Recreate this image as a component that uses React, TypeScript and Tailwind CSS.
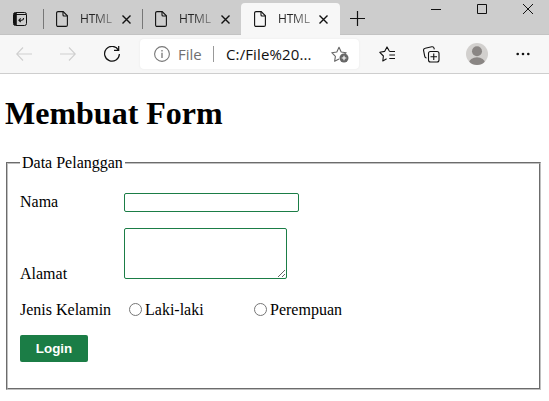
import React from 'react';

function DocIcon() {
  return (
    <svg width="12" height="16" viewBox="0 0 12 16" fill="none" stroke="#111" strokeWidth="1.1" className="shrink-0">
      <path d="M2 .6h5.2l4.2 4.2V14a1.4 1.4 0 0 1-1.4 1.4H2A1.4 1.4 0 0 1 .6 14V2A1.4 1.4 0 0 1 2 .6Z" />
      <path d="M7 .8V4a1 1 0 0 0 1 1h3.2" />
    </svg>
  );
}

function Tab({ className, titleClass }: { className: string; titleClass: string }) {
  return (
    <div className={`flex shrink-0 items-center ${className}`}>
      <DocIcon />
      <span
        className={`ml-3 bg-linear-to-r from-[#222] from-40% to-[#999] bg-clip-text font-['Open_Sans',sans-serif] text-[12px] leading-4 tracking-[-0.2px] text-transparent ${titleClass}`}
      >
        HTML
      </span>
      <svg width="9" height="9" viewBox="0 0 9 9" stroke="#111" strokeWidth="1.4" className="ml-[9px] shrink-0">
        <path d="M.5.5l8 8M8.5.5l-8 8" />
      </svg>
    </div>
  );
}

function TabStrip() {
  return (
    <div className="flex h-[35px] items-start border-b border-[#c3c3c3] bg-[#cdcdcd] pt-[3px]">
      <svg width="14" height="14" viewBox="0 0 14 14" fill="none" stroke="#111" className="mt-[9px] ml-[13px] shrink-0">
        <rect x=".5" y=".5" width="13" height="13" rx="2" />
        <path d="M1 2.5h12" />
        <path d="M2.3 1v12" strokeWidth="3" />
        <path d="M10.5 6v.6c0 1-.6 1.6-1.6 1.6H6M7.7 6.4 5.9 8.2 7.7 10" strokeWidth="1.1" />
      </svg>
      <div className="mt-1.5 ml-4 h-5 w-px bg-[#777]" />
      <Tab className="h-8 w-[98px] pl-3" titleClass="w-[33px]" />
      <div className="mt-1.5 h-5 w-px bg-[#777]" />
      <Tab className="h-8 w-[98px] pl-3" titleClass="w-[33px]" />
      <Tab className="-mb-px h-[33px] w-[99px] rounded-t bg-[#f7f7f7] pb-px pl-[13px]" titleClass="w-8" />
      <svg width="15" height="15" viewBox="0 0 15 15" stroke="#111" strokeWidth="1.2" className="mt-2 ml-[10px] shrink-0">
        <path d="M0 7.5h15M7.5 0v15" />
      </svg>
      <div className="mt-px ml-auto flex w-[118px] gap-9">
        <svg width="10" height="10" viewBox="0 0 10 10" stroke="#111" className="shrink-0">
          <path d="M0 5.5h10" />
        </svg>
        <svg width="10" height="10" viewBox="0 0 10 10" fill="none" stroke="#111" className="shrink-0">
          <path d="M.5.5h9v9h-9z" />
        </svg>
        <svg width="10" height="10" viewBox="0 0 10 10" stroke="#111" className="shrink-0">
          <path d="M0 0l10 10M10 0L0 10" />
        </svg>
      </div>
    </div>
  );
}

function Toolbar() {
  return (
    <div className="flex h-[39px] items-center border-b border-[#cecece] bg-[#f7f7f7] pl-4">
      <svg width="16" height="14" viewBox="0 0 16 14" fill="none" stroke="#cfcfcf" strokeWidth="1.1" className="shrink-0">
        <path d="M16 7H.8M7 .5.7 7 7 13.5" />
      </svg>
      <svg width="16" height="14" viewBox="0 0 16 14" fill="none" stroke="#cfcfcf" strokeWidth="1.1" className="ml-7 shrink-0">
        <path d="M0 7h15.2M9 .5 15.3 7 9 13.5" />
      </svg>
      <svg width="16" height="16" viewBox="0 0 16 16" fill="none" stroke="#111" strokeWidth="1.2" className="ml-7 shrink-0">
        <path d="M14.4 4A7.4 7.4 0 1 0 15.4 8M14.7 0v4.4H10" />
      </svg>
      <div className="ml-5 flex h-[30px] w-[219px] shrink-0 items-center rounded bg-white pl-3.5 font-['Open_Sans',sans-serif] text-[15px] leading-5 shadow-[0_0_2px_#e6e6e6]">
        <svg width="16" height="16" viewBox="0 0 16 16" fill="none" stroke="#777" strokeWidth="1.1" className="shrink-0">
          <circle cx="8" cy="8" r="7.4" />
          <path d="M8 6.8V12M8 4v1.4" strokeWidth="1.3" />
        </svg>
        <span className="ml-2 w-[35px] text-[#707070]">File</span>
        <div className="h-4 w-px bg-[#999]" />
        <span className="ml-3 w-[106px] tracking-[0.12px] text-[#111]">C:/File%20...</span>
        <svg width="18" height="17" viewBox="0 0 18 17" fill="none" stroke="#666" strokeWidth="1.1" className="-ml-px shrink-0">
          <path d="M8 13 3.6 15.3l.8-5L.8 6.7l5-.7L8 1.3 10.2 6l5 .7-1.8 1.7" strokeLinejoin="round" />
          <circle cx="13" cy="12" r="4.5" fill="#666" stroke="none" />
          <path d="M10.7 12h4.6M13 9.7v4.6" stroke="#fff" />
        </svg>
      </div>
      <svg width="17" height="16" viewBox="0 0 17 16" fill="none" stroke="#111" strokeWidth="1.1" className="ml-5 shrink-0">
        <path
          d="M7.6 12.8 3.8 15l.6-5L.8 6.3l4.8-.9L8 .9l2.3 4.1M10.3 5.5H16M10.3 9H16M10.3 12.5H16"
          strokeLinejoin="round"
        />
      </svg>
      <svg width="17" height="17" viewBox="0 0 17 17" fill="none" stroke="#111" strokeWidth="1.1" className="ml-[27px] shrink-0">
        <path d="m3.6 12-.8-.3a2 2 0 0 1-1.1-1.5L.6 4.6a2 2 0 0 1 1.6-2.3L8.8.8a2 2 0 0 1 2.3 1.6l.2 1" />
        <rect x="5.5" y="5.5" width="10.5" height="10.5" rx="2" />
        <path d="M7.5 10.75H14M10.75 7.5V14" />
      </svg>
      <svg width="22" height="22" viewBox="0 0 22 22" className="ml-[26px] shrink-0">
        <defs>
          <clipPath id="avatar">
            <circle cx="11" cy="11" r="11" />
          </clipPath>
        </defs>
        <g clipPath="url(#avatar)">
          <rect width="22" height="22" fill="#d2d0ce" />
          <circle cx="11" cy="8.2" r="5" fill="#8a8684" />
          <ellipse cx="11" cy="20" rx="8" ry="5.7" fill="#8a8684" />
        </g>
      </svg>
      <svg width="14" height="4" viewBox="0 0 14 4" fill="#111" className="ml-7 shrink-0">
        <circle cx="1.7" cy="2" r="1.3" />
        <circle cx="7" cy="2" r="1.3" />
        <circle cx="12.3" cy="2" r="1.3" />
      </svg>
    </div>
  );
}

function RadioOption({ label, className }: { label: string; className: string }) {
  return (
    <label className={`flex ${className}`}>
      <input
        type="radio"
        name="jk"
        className="mt-[2px] mr-[3px] size-[13px] shrink-0 appearance-none rounded-full border border-[#767676] bg-white"
      />
      {label}
    </label>
  );
}

export default function App() {
  return (
    <div className="h-[401px] w-[549px] overflow-hidden bg-white">
      <TabStrip />
      <Toolbar />
      <main className="pr-2 pl-[5px] font-['Liberation_Serif',serif] text-[16px] leading-[18px] text-black">
        <h1 className="pt-[21px] text-[32px] leading-[37px] font-bold">Membuat Form</h1>
        <form className="pt-[22px]">
          <fieldset className="ml-px h-[236px] w-[535px] border-2 border-[#c0c0c0] [border-style:groove] px-3">
            <legend className="px-0.5">Data Pelanggan</legend>
            <div className="flex pt-[21px]">
              <label className="w-[104px]">Nama</label>
              <input type="text" className="h-[19px] w-[175px] rounded-xs border border-[#1b7d46] bg-white" />
            </div>
            <div className="mt-4 flex items-end">
              <label className="mb-[-4px] w-[104px]">Alamat</label>
              <textarea className="block h-[51px] w-[163px] resize rounded-xs border border-[#1b7d46] bg-white" />
            </div>
            <div className="mt-[22px] flex">
              <span className="w-[109px]">Jenis Kelamin</span>
              <RadioOption label="Laki-laki" className="w-[125px]" />
              <RadioOption label="Perempuan" className="" />
            </div>
            <button
              type="button"
              className="mt-4 block h-[27px] w-[68px] rounded-xs bg-[#1b7d46] font-['Liberation_Sans',sans-serif] text-[13.33px] leading-[15px] font-bold text-white"
            >
              Login
            </button>
          </fieldset>
        </form>
      </main>
    </div>
  );
}
